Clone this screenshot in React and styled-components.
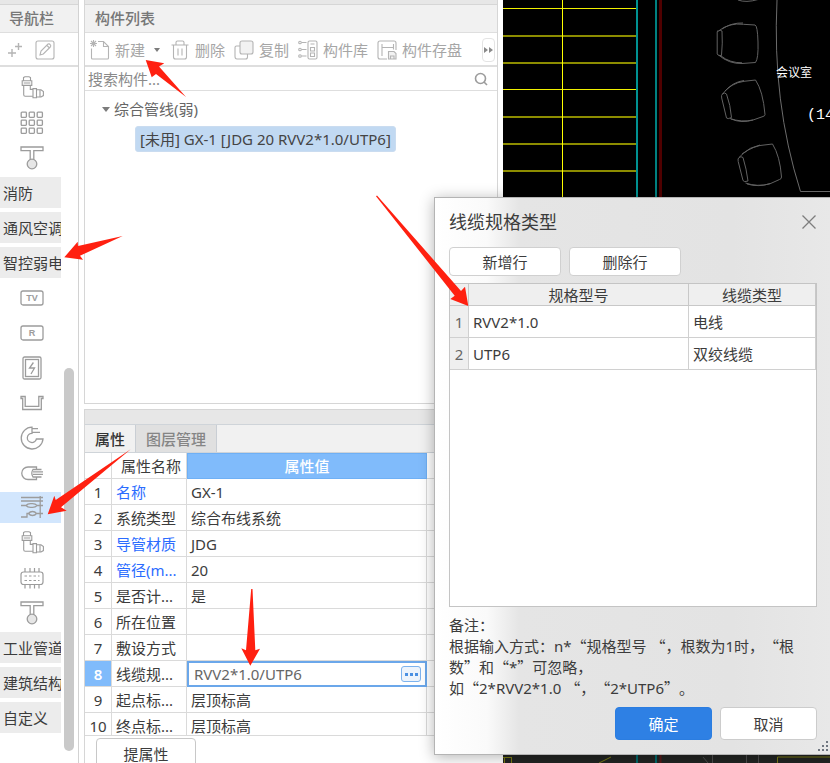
import { useState } from "react";
import styled, { createGlobalStyle, css } from "styled-components";

const GlobalStyle = createGlobalStyle`
  * {
    box-sizing: border-box;
  }
  body {
    margin: 0;
    overflow: hidden;
    background: #ffffff;
    color: #3c3c3c;
    font: 15px/20px "Noto Sans", "Noto Sans CJK SC", sans-serif;
  }
  button, input {
    font: inherit;
    color: inherit;
  }
`;

/* ---------- icons ---------- */

const Icon = ({ children, size = 24, color = "#9c9c9c", width = 1.1 }) => (
  <svg width={size} height={size} viewBox={`0 0 ${size} ${size}`} fill="none" stroke={color} strokeWidth={width} aria-hidden="true">
    {children}
  </svg>
);

const ElbowIcon = () => (
  <Icon>
    <path d="M3.5 1.5 5 .7h4l1.500.8v3.300h-7zM2.200 4.800h9.600v4.600H2.200zM3.700 9.400v9.400q0 1.500 1.500 1.500h7.200M10.300 9.400v4h2.300M13 12.600h3.500v9.200H13zM16.500 13.800H21l2.400 1.800v4L21 21h-4.500M20 13.800V21M3.700 7h6.600" />
  </Icon>
);

const GridIcon = () => (
  <Icon width={1.3}>
    {[1.2, 9.2, 17.2].map((y) =>
      [1.2, 9.2, 17.2].map((x) => <rect key={`${x}-${y}`} x={x} y={y} width="5.2" height="5.2" rx=".8" />)
    )}
  </Icon>
);

const TeeIcon = () => (
  <Icon width={1.3}>
    <path d="M10.200 13.700V4.600H1V1h22v3.600h-9.200v9.100" />
    <circle cx="12" cy="18" r="4.8" fill="#e6e6e6" />
  </Icon>
);

const LabelIcon = ({ label }) => (
  <Icon width={1.3}>
    <rect x="1" y="5" width="22" height="14" rx="2" />
    <text x="12" y="15.4" textAnchor="middle" fontSize="9" fontWeight="700" fontFamily="Liberation Sans, sans-serif" fill="#9c9c9c" stroke="none">
      {label}
    </text>
  </Icon>
);

const PowerIcon = () => (
  <Icon width={1.3}>
    <rect x="3" y="1" width="18" height="22" rx="1.5" />
    <rect x="5.5" y="3.5" width="13" height="17" />
    <path d="M13.400 6.500 9.500 12h5L11 18" />
  </Icon>
);

const TrayIcon = () => (
  <Icon width={1.3}>
    <path d="M1 5.500h4.200v9.800h13.600V5.500H23v2h-1.700v11H2.700v-11H1z" />
  </Icon>
);

const CoilIcon = () => (
  <Icon width={1.3}>
    <path d="M12 1.200A10.900 10.900 0 1 0 23 13h-6.600a4.600 4.600 0 1 1-4.400-5.700zM12 2.600h6M12 6.300h8" />
  </Icon>
);

const PlugIcon = () => (
  <Icon width={1.3}>
    <path d="M16.500 8V6H8a6.200 6.200 0 0 0 0 12.500h8.500v-2M16.500 8.500H13q-2.500 3.700 0 7.500h3.500M13 8.500h8.500M13 10.900h10M13 13.400h10M13 16h8.500" />
  </Icon>
);

const WiresIcon = () => (
  <Icon width={1.3}>
    <path d="M1 1.500h22M1 5h22M1 9.500h5q1.500-1.800 4.500-1.800h2q3 0 4.500 1.800H23M6 9.500q1.500 1.800 4.500 1.800h2q3 0 4.500-1.800M1 21h6v-3.500h1.500q1.500-2 4-2t4 2q-1.500 2-4 2t-4-2M16.500 17.500H23M20.200 0v22" />
  </Icon>
);

const ChipIcon = () => (
  <Icon width={1.2}>
    <rect x="1" y="6" width="22" height="12.5" rx="2.5" />
    <path d="M5 2v4M10 2v4M14.500 2v4M19 2v4M5 18.500v4M10 18.500v4M14.500 18.500v4M19 18.500v4" />
    <path d="M4.500 10h15M4.500 14.500h15" strokeDasharray="2.5 2" />
  </Icon>
);

const NewIcon = () => (
  <Icon size={20} color="#b4b4b4">
    <path d="M8 1.500h5.500l5 5V18q0 1-1 1H2.500q-1 0-1-1V8.500M13.500 1.500v5h5" />
    <path d="m1 1 5 5m0-5-5 5M3.500 0v7M0 3.500h7" />
  </Icon>
);

const TrashIcon = () => (
  <Icon size={20} color="#b4b4b4">
    <path d="M1.500 5h17M6 5V2.500Q6 1 7.500 1h5Q14 1 14 2.500V5M3.500 5v12q0 2 2 2h9q2 0 2-2V5M8 8.500v7M12 8.500v7" />
  </Icon>
);

const CopyIcon = () => (
  <Icon size={20} color="#b4b4b4">
    <rect x="6" y="1" width="13" height="13" rx="2" fill="#f2f2f2" />
    <path d="M6 6H2.500q-1.500 0-1.500 1.500v9Q1 19 3 19h8.500q2 0 2-2v-3" />
  </Icon>
);

const LibraryIcon = () => (
  <Icon size={20} color="#b4b4b4">
    <rect x="10" y="1" width="9" height="18" rx="1.5" />
    <path d="M12.500 4h4M12.500 7.500h4v3.500h-4zM12.500 13h4v3.500h-4zM3.500 2.500h5M3.500 9.500h5M3.500 16h5" />
    <circle cx="2" cy="2.5" r="1.3" />
    <circle cx="2" cy="9.5" r="1.3" />
    <circle cx="2" cy="16" r="1.3" />
  </Icon>
);

const SaveIcon = () => (
  <Icon size={20} color="#b4b4b4">
    <path d="M10 19H3q-2 0-2-2V3q0-2 2-2h14q2 0 2 2v7M5 4v12M5 7.500h11.500M16.500 4v5.500" />
    <path d="M11.500 11.500h5.500l2 2V19h-7.500zM13.500 19v-3h3.500v3" fill="#f2f2f2" />
  </Icon>
);

const EditIcon = () => (
  <Icon size={20} color="#b4b4b4">
    <rect x="1" y="1" width="18" height="18" rx="2" />
    <path d="m5 15 1-4 7-7q1.500-.6 2.500 1 .7 1-.2 2l-7 7zM12 5.500l2.500 2.500" />
  </Icon>
);

const PlusIcon = () => (
  <Icon size={20} color="#b4b4b4" width={1.4}>
    <path d="M5 9v8M1 13h8M11.500 3v7M8 6.500h7" />
  </Icon>
);

const SearchIcon = () => (
  <Icon size={16} width={1.6}>
    <circle cx="7.5" cy="7.5" r="5" />
    <path d="m11 11 3 3" />
  </Icon>
);

const CloseIcon = () => (
  <Icon size={16} color="#7d7d7d" width={1.3}>
    <path d="m1.500 1.500 13 13m0-13-13 13" />
  </Icon>
);

const Triangle = () => (
  <svg width="8" height="5" viewBox="0 0 8 5" aria-hidden="true">
    <path d="M0 0h8L4 5z" fill="#7c7c7c" />
  </svg>
);

const SmallTriangle = () => (
  <svg width="6" height="4" viewBox="0 0 6 4" aria-hidden="true">
    <path d="M0 0h6L3 4z" fill="#7c7c7c" />
  </svg>
);

const MoreIcon = () => (
  <svg width="10" height="8" viewBox="0 0 10 8" aria-hidden="true">
    <path d="M0 1l4 3-4 3zM5 1l4 3-4 3z" fill="#8a8a8a" />
  </svg>
);

const GripIcon = () => (
  <svg width="12" height="12" viewBox="0 0 12 12" fill="#6f7680" aria-hidden="true">
    <path d="M9 1h2v2H9zM5 5h2v2H5zM9 5h2v2H9zM1 9h2v2H1zM5 9h2v2H5zM9 9h2v2H9z" />
  </svg>
);

/* ---------- drawing area ---------- */

const ROW_LINES = [
  { y: 8, bright: true },
  { y: 35 },
  { y: 62 },
  { y: 89, bright: true },
  { y: 116 },
  { y: 143 },
  { y: 170 },
];

const CadDrawing = () => (
  <svg width="100%" height="100%" viewBox="503 0 327 763" preserveAspectRatio="xMinYMin slice" role="img" aria-label="会议室平面图">
    {ROW_LINES.map(({ y, bright }) => (
      <rect key={y} x="503" y={y} width="134" height={bright ? 1 : 2} fill={bright ? "#f0f000" : "#8c8c00"} />
    ))}
    <rect x="562" y="0" width="1" height="200" fill="#ffff00" />
    <rect x="636" y="0" width="2" height="763" fill="#009292" />
    <rect x="655" y="0" width="2" height="763" fill="#008080" />
    <rect x="659" y="0" width="3" height="763" fill="#500000" />
    <g fill="none" stroke="#626262">
      <path d="M738 0q8 3 20-.5" />
      <path d="M718.500 31Q729 22.500 743.500 24.300L755 25Q757.500 25.500 758 42t-2.500 20.500L742 63.500Q729 64 718.500 55M718.500 31q-1-1-1.300 1v22q.5 2 4.300 1.500Q722.800 43 722 31q-2-1.500-3.500 0M722 29q10-6.500 21-6M721 56q9 7 21 6.800" />
      <path d="M722.500 94Q731 83 744 81.300l11.500-1.300Q763 91 765 114.500q0 1.500-2 2l-10 3.500Q741 122.500 730 118.500M722.500 94q-1.500 1-.8 4l4.800 20q1 1.500 5-.5Q730.500 105 726.500 94q-2-2-4 0M725 91q8-9 19-10.500M731 119q11 4.500 22 1" />
      <path d="M739 157.500Q747 148.500 760 145.500l12.500-1.500Q780 156 781.500 177q0 2-2 2.500l-10 4.500Q757 187 745.500 183M739 157.500q-1.500 1-.8 4l4.800 19q1 2 5 .5Q746.500 169 743 157.500q-2-1.500-4 0M742 154q8-7 18-9M747 184q12 3.500 23-.5" />
      <path d="M777 0Q772 102 800.500 191.500H830" stroke="#6c6c6c" />
    </g>
    <g fill="#ffffff">
      <text x="776" y="77" fontSize="12" fontFamily="Noto Sans CJK SC, sans-serif">会议室</text>
      <text x="807" y="119" fontSize="15" fontFamily="Liberation Mono, monospace">(14</text>
    </g>
    <rect x="503" y="750" width="327" height="13" fill="#222422" />
    <path d="M503 757.500h9M504.500 757v6M511.500 757v6M599 763l12-6M777.500 763v-6H830" fill="none" stroke="#7b7b14" />
    <path d="M637 750v13M656 750v13" stroke="#00696b" strokeWidth="2" />
    <path d="M660.500 750v13" stroke="#581818" strokeWidth="2" />
    <path d="M703 757l5 6M712.500 755v8M746.500 755v8M758.500 755v8" stroke="#4d4d4d" />
  </svg>
);

const ArrowNotes = () => (
  <Overlay viewBox="0 0 830 763" width="830" height="763" fill="#ff2010" aria-hidden="true">
    <path d="M145.700 60l18.600 3.300-5.300 3.200L186 97l-30-23-4.300 3.300z" />
    <path d="M64.300 257.300l13.400-15.600.3 4.300 44.700-10L80 255.700l3 4z" />
    <path d="M47.700 514.300l6.600-18.600 1.400 4.300 75-50.700L61 507.300l5.700 3.400z" />
    <path d="M250.300 665.700l-9-17.400 4.700 2L251.200 589h1.300l2.800 61.300 4.700-1.600z" />
    <path d="M468.300 306l-3.300-19.300-4 4.300-84-95.500-1 .7 78.700 99.500-4.400 3.300z" />
  </Overlay>
);

/* ---------- data ---------- */

const NAV_ITEMS = [
  { icon: ElbowIcon, name: "弯头" },
  { icon: GridIcon, name: "网格" },
  { icon: TeeIcon, name: "支架" },
  { group: "消防" },
  { group: "通风空调" },
  { group: "智控弱电" },
  { icon: LabelIcon, name: "TV", label: "TV" },
  { icon: LabelIcon, name: "R", label: "R" },
  { icon: PowerIcon, name: "配电箱" },
  { icon: TrayIcon, name: "桥架" },
  { icon: CoilIcon, name: "线缆" },
  { icon: PlugIcon, name: "电缆导管" },
  { icon: WiresIcon, name: "综合管线", selected: true },
  { icon: ElbowIcon, name: "通头" },
  { icon: ChipIcon, name: "设备" },
  { icon: TeeIcon, name: "零星构件" },
  { group: "工业管道" },
  { group: "建筑结构" },
  { group: "自定义" },
];

const TOOLS = [
  { icon: NewIcon, text: "新建", menu: true },
  { icon: TrashIcon, text: "删除" },
  { icon: CopyIcon, text: "复制" },
  { icon: LibraryIcon, text: "构件库" },
  { icon: SaveIcon, text: "构件存盘" },
];

const PROPERTIES = [
  { name: "名称", value: "GX-1", key: true },
  { name: "系统类型", value: "综合布线系统" },
  { name: "导管材质", value: "JDG", key: true },
  { name: "管径(m...", value: "20", key: true },
  { name: "是否计...", value: "是" },
  { name: "所在位置", value: "" },
  { name: "敷设方式", value: "" },
  { name: "线缆规...", value: "RVV2*1.0/UTP6", editing: true },
  { name: "起点标...", value: "层顶标高" },
  { name: "终点标...", value: "层顶标高" },
];

const CABLES = [
  { spec: "RVV2*1.0", type: "电线" },
  { spec: "UTP6", type: "双绞线缆" },
];

/* ---------- page ---------- */

const App = () => {
  const [spec, setSpec] = useState("RVV2*1.0/UTP6");

  return (
    <Page>
      <GlobalStyle />

      <NavPanel>
        <Strip />
        <PanelTitle $inset={9}>导航栏</PanelTitle>
        <NavTools>
          <IconButton aria-label="展开"><PlusIcon /></IconButton>
          <IconButton aria-label="编辑"><EditIcon /></IconButton>
        </NavTools>
        <NavBody>
          <NavList>
            {NAV_ITEMS.map(({ icon: ItemIcon, group, name, label, selected }, i) =>
              group ? (
                <NavGroup key={i}>{group}</NavGroup>
              ) : (
                <NavItem key={i} $selected={selected} aria-label={name}>
                  <ItemIcon label={label} />
                </NavItem>
              )
            )}
          </NavList>
          <ScrollTrack>
            <ScrollThumb />
          </ScrollTrack>
        </NavBody>
      </NavPanel>

      <MainColumn>
        <ComponentPanel>
          <Strip />
          <PanelTitle $inset={10}>构件列表</PanelTitle>
          <Toolbar>
            {TOOLS.map(({ icon: ToolIcon, text, menu }) => (
              <ToolButton key={text}>
                <ToolIcon />
                {text}
                {menu && <MenuCaret><SmallTriangle /></MenuCaret>}
              </ToolButton>
            ))}
            <MoreButton aria-label="更多"><MoreIcon /></MoreButton>
          </Toolbar>
          <SearchBar>
            <SearchInput aria-label="搜索构件" placeholder="搜索构件..." />
            <SearchIcon />
          </SearchBar>
          <Tree>
            <TreeGroup>
              <Triangle />
              综合管线(弱)
            </TreeGroup>
            <TreeLeaf>[未用] GX-1 [JDG 20 RVV2*1.0/UTP6]</TreeLeaf>
          </Tree>
        </ComponentPanel>

        <PropertyPanel>
          <PropertyStrip />
          <Tabs>
            <Tab $active>属性</Tab>
            <Tab>图层管理</Tab>
          </Tabs>
          <PropertyScroll>
            <PropertyTable>
              <colgroup>
                <col width="27" />
                <col width="75" />
                <col width="240" />
                <col />
              </colgroup>
              <thead>
                <tr>
                  <PropertyCell as="th" />
                  <PropertyCell as="th" $align="center">属性名称</PropertyCell>
                  <ValueHead>属性值</ValueHead>
                  <PropertyCell as="th" />
                </tr>
              </thead>
              <tbody>
                {PROPERTIES.map(({ name, value, key, editing }, i) => (
                  <tr key={name}>
                    <NumberCell $active={editing}>{i + 1}</NumberCell>
                    <PropertyCell $key={key}>{name}</PropertyCell>
                    {editing ? (
                      <EditCell>
                        <Editor>
                          <EditorInput aria-label="线缆规格类型" value={spec} onChange={(e) => setSpec(e.target.value)} />
                          <DotsButton aria-label="选择规格">
                            <i /><i /><i />
                          </DotsButton>
                        </Editor>
                      </EditCell>
                    ) : (
                      <PropertyCell>{value}</PropertyCell>
                    )}
                    <PropertyCell />
                  </tr>
                ))}
              </tbody>
            </PropertyTable>
          </PropertyScroll>
          <PropertyFooter>
            <FooterButton>提属性</FooterButton>
          </PropertyFooter>
        </PropertyPanel>
      </MainColumn>

      <CanvasArea>
        <CadDrawing />
      </CanvasArea>

      <Dialog role="dialog" aria-label="线缆规格类型">
        <DialogHeader>
          <DialogTitle>线缆规格类型</DialogTitle>
          <IconButton aria-label="关闭"><CloseIcon /></IconButton>
        </DialogHeader>
        <DialogActions>
          <DialogButton>新增行</DialogButton>
          <DialogButton>删除行</DialogButton>
        </DialogActions>
        <CableBox>
          <CableTable>
            <colgroup>
              <col width="19" />
              <col />
              <col width="127" />
            </colgroup>
            <thead>
              <tr>
                <CableHead />
                <CableHead>规格型号</CableHead>
                <CableHead>线缆类型</CableHead>
              </tr>
            </thead>
            <tbody>
              {CABLES.map(({ spec: cableSpec, type }, i) => (
                <tr key={cableSpec}>
                  <CableNumber>{i + 1}</CableNumber>
                  <CableCell>{cableSpec}</CableCell>
                  <CableCell>{type}</CableCell>
                </tr>
              ))}
            </tbody>
          </CableTable>
        </CableBox>
        <Note>
          备注：
          <br />
          根据输入方式：n*<Quote>“</Quote>规格型号 <Quote>“，</Quote>根数为1时，<Quote>“</Quote>根
          <br />
          数<Quote>”</Quote>和<Quote>“</Quote>*<Quote>”</Quote>可忽略，
          <br />
          如<Quote>“</Quote>2*RVV2*1.0 <Quote>“，“</Quote>2*UTP6<Quote>”</Quote>。
        </Note>
        <DialogFooter>
          <FooterAction $primary>确定</FooterAction>
          <FooterAction>取消</FooterAction>
        </DialogFooter>
        <Grip><GripIcon /></Grip>
      </Dialog>

      <ArrowNotes />
    </Page>
  );
};

export default App;

const Page = styled.div`
  position: relative;
  display: flex;
  gap: 5px;
  height: 100vh;
  overflow: hidden;
  background: #ffffff;
`;

const Overlay = styled.svg`
  position: absolute;
  top: 0;
  left: 0;
  pointer-events: none;
`;

const NavPanel = styled.nav`
  display: flex;
  flex-direction: column;
  flex: 0 0 79px;
  border-right: 1px solid #d2d2d2;
`;

const Strip = styled.div`
  height: 5px;
  flex: none;
  background: #e7e7e7;
  border-bottom: 1px solid #d6d6d6;
`;

const PanelTitle = styled.h2`
  flex: none;
  height: 28px;
  margin: 0;
  padding: 3px 0 0 ${(props) => props.$inset}px;
  background: #f1f1f1;
  border-bottom: 1px solid #dedede;
  color: #777777;
  font-size: 15px;
  font-weight: 500;
`;

const NavTools = styled.div`
  display: flex;
  align-items: center;
  gap: 8px;
  height: 34px;
  flex: none;
  padding: 1px 0 0 7px;
  border-bottom: 2px solid #dedede;
`;

const IconButton = styled.button`
  display: flex;
  padding: 0;
  border: none;
  background: none;
`;

const NavBody = styled.div`
  display: flex;
  gap: 3px;
  flex: 1;
  min-height: 0;
`;

const NavList = styled.div`
  display: flex;
  flex-direction: column;
  gap: 4px;
  flex: 0 0 61px;
  padding-top: 5px;
  overflow: hidden;
`;

const navEntry = css`
  flex: none;
  height: 31px;
  border: none;
`;

const NavItem = styled.button`
  ${navEntry}
  display: flex;
  align-items: center;
  justify-content: center;
  padding: 0 0 0 2px;
  background: ${(props) => (props.$selected ? "#d2e6fd" : "none")};
`;

const NavGroup = styled.button`
  ${navEntry}
  padding: 0 0 0 3px;
  overflow: hidden;
  background: #ececec;
  text-align: left;
  white-space: nowrap;
`;

const ScrollTrack = styled.div`
  display: flex;
  flex-direction: column;
  justify-content: flex-end;
  width: 10px;
  padding-bottom: 12px;
`;

const ScrollThumb = styled.div`
  height: 56%;
  border-radius: 5px;
  background: #c9c9c9;
`;

const MainColumn = styled.main`
  display: flex;
  flex-direction: column;
  gap: 5px;
  flex: 0 0 414px;
`;

const ComponentPanel = styled.section`
  display: flex;
  flex-direction: column;
  flex: 1;
  min-height: 0;
  border: 1px solid #d6d6d6;
  border-top: none;
`;

const Toolbar = styled.div`
  display: flex;
  align-items: center;
  gap: 9px;
  flex: none;
  height: 34px;
  padding: 2px 2px 0 5px;
  border-bottom: 2px solid #dedede;
`;

const ToolButton = styled.button`
  display: flex;
  align-items: center;
  gap: 5px;
  padding: 0;
  border: none;
  background: none;
  color: #a6a6a6;
  white-space: nowrap;
`;

const MenuCaret = styled.span`
  display: flex;
  padding: 0 1px 0 4px;
`;

const MoreButton = styled.button`
  display: flex;
  align-items: center;
  justify-content: center;
  width: 13px;
  height: 24px;
  margin-left: auto;
  padding: 0;
  border: 1px solid #e4e4e4;
  border-radius: 4px;
  background: #ffffff;
`;

const SearchBar = styled.div`
  display: flex;
  align-items: center;
  flex: none;
  height: 24px;
  padding: 0 8px 0 3px;
  border-bottom: 1px solid #dedede;
`;

const SearchInput = styled.input`
  flex: 1;
  min-width: 0;
  padding: 0;
  border: none;
  outline: none;
  background: none;
  &::placeholder {
    color: #8a8a8a;
    opacity: 1;
  }
`;

const Tree = styled.div`
  flex: 1;
  display: flex;
  flex-direction: column;
  align-items: flex-start;
  gap: 7px;
  padding: 8px 0 0 17px;
`;

const TreeGroup = styled.div`
  display: flex;
  align-items: center;
  gap: 4px;
  color: #666666;
`;

const TreeLeaf = styled.div`
  margin-left: 33px;
  padding: 2px 4px;
  border: 1px solid #cadcf0;
  border-radius: 3px;
  background: #c1d9f2;
  color: #444444;
  white-space: nowrap;
`;

const PropertyPanel = styled.section`
  flex: none;
  border: 1px solid #d6d6d6;
  border-width: 1px 0 0 1px;
`;

const PropertyStrip = styled.div`
  height: 14px;
  background: #e7e7e7;
`;

const Tabs = styled.div`
  display: flex;
  height: 29px;
  border: 1px solid #cfd4d9;
  border-width: 1px 0;
  background: #f1f1f1;
`;

const Tab = styled.button`
  padding: 0 10px;
  border: none;
  border-right: 1px solid #c9ced4;
  background: ${(props) => (props.$active ? "#f1f1f1" : "#e0e0e0")};
  color: ${(props) => (props.$active ? "#333333" : "#858585")};
  font-weight: 500;
`;

const PropertyScroll = styled.div`
  height: 283px;
  overflow: hidden;
  border-bottom: 1px solid #dadada;
`;

const PropertyTable = styled.table`
  width: 100%;
  table-layout: fixed;
  border-collapse: separate;
  border-spacing: 0;
`;

const PropertyCell = styled.td`
  height: 26px;
  padding: 0 0 0 4px;
  border: 1px solid #dadada;
  border-width: 0 1px 1px 0;
  overflow: hidden;
  white-space: nowrap;
  font-weight: 400;
  text-align: ${(props) => props.$align || "left"};
  color: ${(props) => (props.$key ? "#2b6cff" : "inherit")};
`;

const ValueHead = styled.th`
  padding: 0;
  border: 1px solid #6fb0f5;
  background: #80bbfb;
  color: #ffffff;
  font-weight: 500;
`;

const NumberCell = styled(PropertyCell)`
  padding: 0;
  text-align: center;
  background: ${(props) => (props.$active ? "#80bbfb" : "none")};
  color: ${(props) => (props.$active ? "#ffffff" : "inherit")};
  font-weight: ${(props) => (props.$active ? 600 : 400)};
`;

const EditCell = styled.td`
  padding: 0;
`;

const Editor = styled.div`
  display: flex;
  align-items: center;
  height: 26px;
  padding: 0 4px 0 5px;
  border: 2px solid #6ba7ea;
`;

const EditorInput = styled.input`
  flex: 1;
  min-width: 0;
  padding: 0;
  border: none;
  outline: none;
  background: none;
  color: #666666;
`;

const DotsButton = styled.button`
  display: flex;
  align-items: center;
  justify-content: center;
  gap: 2px;
  width: 20px;
  height: 16px;
  padding: 0;
  border: 1px solid #7db3ee;
  border-radius: 3px;
  background: #edf4fc;
  i {
    width: 3px;
    height: 3px;
    background: #4a90e2;
  }
`;

const PropertyFooter = styled.div`
  height: 27px;
  padding: 2px 0 0 11px;
  overflow: hidden;
`;

const FooterButton = styled.button`
  width: 100px;
  height: 32px;
  padding: 0;
  border: 1px solid #c8c8c8;
  border-radius: 4px;
  background: #ffffff;
`;

const CanvasArea = styled.div`
  flex: 1;
  min-width: 0;
  background: #000000;
`;

const Dialog = styled.div`
  position: absolute;
  top: 197px;
  right: -2px;
  bottom: 8px;
  left: 434px;
  display: flex;
  flex-direction: column;
  padding: 14px;
  border: 1px solid #b4b4b4;
  background: linear-gradient(to right, #ffffff 0, #fafafa 52px, #e5e5e5 84px, #e3e3e3 75%, #e8e8e8 100%);
  box-shadow: 0 2px 14px rgba(0, 0, 0, 0.3);
`;

const DialogHeader = styled.div`
  display: flex;
  align-items: center;
  justify-content: space-between;
`;

const DialogTitle = styled.h1`
  margin: 0;
  font-size: 18px;
  line-height: 20px;
  font-weight: 400;
`;

const DialogActions = styled.div`
  display: flex;
  gap: 8px;
  padding: 15px 0 7px;
`;

const DialogButton = styled.button`
  width: 112px;
  height: 29px;
  padding: 0;
  border: 1px solid #d0d0d0;
  border-radius: 4px;
  background: #ffffff;
`;

const CableBox = styled.div`
  flex: 1;
  min-height: 0;
  border: 1px solid #c4c4c4;
  background: #ffffff;
`;

const CableTable = styled.table`
  width: 100%;
  table-layout: fixed;
  border-collapse: separate;
  border-spacing: 0;
`;

const CableCell = styled.td`
  height: 32px;
  padding: 0 4px;
  border: 1px solid #d0d0d0;
  border-width: 0 1px 1px 0;
`;

const CableHead = styled.th`
  height: 22px;
  padding: 0;
  border: 1px solid #c8c8c8;
  border-width: 0 1px 1px 0;
  background: #efefef;
  font-weight: 400;
`;

const CableNumber = styled(CableCell)`
  padding: 0;
  background: #efefef;
  color: #666666;
  text-align: center;
`;

const Note = styled.p`
  margin: 8px 0 8px;
  line-height: 21px;
  white-space: nowrap;
  text-spacing-trim: space-all;
`;

const Quote = styled.span`
  font-family: "Noto Sans CJK SC", sans-serif;
  line-height: 1;
`;

const DialogFooter = styled.div`
  display: flex;
  justify-content: flex-end;
  gap: 8px;
`;

const FooterAction = styled.button`
  width: 97px;
  height: 33px;
  padding: 0;
  border: 1px solid ${(props) => (props.$primary ? "#2b7de0" : "#cccccc")};
  border-radius: 4px;
  background: ${(props) => (props.$primary ? "#2e80e4" : "#ffffff")};
  color: ${(props) => (props.$primary ? "#ffffff" : "inherit")};
`;

const Grip = styled.span`
  position: absolute;
  right: 2px;
  bottom: 2px;
  display: flex;
`;
